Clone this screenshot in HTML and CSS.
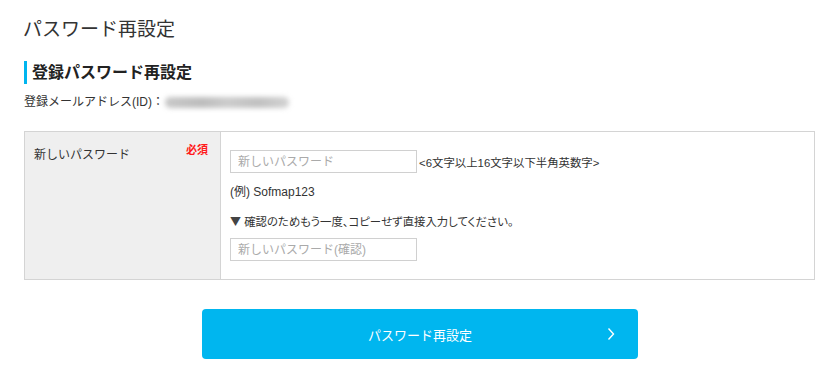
FILE: index.html
```html
<!DOCTYPE html>
<html lang="ja">
<head>
<meta charset="utf-8">
<title>パスワード再設定</title>
<link rel="stylesheet" href="styles.css">
</head>
<body>
<div class="page">
  <h1 class="title">パスワード再設定</h1>
  <h2 class="section">登録パスワード再設定</h2>
  <p class="email">登録メールアドレス(ID)：<span class="masked" aria-hidden="true"></span></p>

  <div class="form-table">
    <div class="label-cell">
      <span class="label">新しいパスワード</span>
      <span class="req">必須</span>
    </div>
    <div class="field-cell">
      <div class="row">
        <input class="pw" type="password" placeholder="新しいパスワード">
        <span class="hint">&lt;6文字以上16文字以下半角英数字&gt;</span>
      </div>
      <p class="example">(例) Sofmap123</p>
      <p class="note"><span class="tri">▼</span> 確認のためもう一度、コピーせず直接入力してください。</p>
      <input class="pw pw2" type="password" placeholder="新しいパスワード(確認)">
    </div>
  </div>

  <div class="actions">
    <button class="submit" type="button">
      <span>パスワード再設定</span>
      <svg class="chev" width="8" height="14" viewBox="0 0 8 14"><polyline points="1.5,1.5 6.5,7 1.5,12.5" fill="none" stroke="#fff" stroke-width="1.4"/></svg>
    </button>
  </div>
</div>
</body>
</html>
```

FILE: styles.css
```css
* { box-sizing: border-box; }
html, body { margin: 0; padding: 0; background: #fff; }
body {
  font-family: "Liberation Sans", "Noto Sans CJK JP", sans-serif;
  color: #333;
  font-size: 12px;
}
.page {
  padding: 20px 25px 0 24px;
}
.title {
  margin: 0;
  font-size: 19px;
  line-height: 19px;
  font-weight: normal;
  color: #333;
  margin-left: -1px;
}
.section {
  margin: 22px 0 0 0;
  border-left: 3px solid #00b5ef;
  padding-left: 5px;
  font-size: 16px;
  line-height: 23px;
  font-weight: bold;
  color: #222;
}
.email {
  margin: 9px 0 0 0;
  font-size: 12px;
  line-height: 18px;
  display: flex;
  align-items: center;
}
.masked {
  display: inline-block;
  width: 124px;
  height: 11px;
  margin-left: 1px;
  border-radius: 5px;
  background: linear-gradient(90deg, #c8c8c8, #bcbcbc 30%, #cbcbcb 50%, #c0c0c0 75%, #d2d2d2);
  filter: blur(2.5px);
}
.form-table {
  margin-top: 20px;
  border: 1px solid #d4d4d4;
  display: grid;
  grid-template-columns: 196px 1fr;
  height: 149px;
}
.label-cell {
  background: #efefef;
  border-right: 1px solid #d4d4d4;
  padding: 14px 12px 0 9px;
  display: flex;
  justify-content: space-between;
  align-items: flex-start;
}
.label {
  font-size: 12px;
  line-height: 18px;
}
.req {
  color: #ff1a1a;
  font-size: 11px;
  line-height: 14px;
  font-weight: bold;
  margin-top: -3px;
}
.field-cell {
  padding: 18px 0 0 9px;
}
.row {
  display: flex;
  align-items: center;
}
.pw {
  width: 187px;
  height: 23px;
  border: 1px solid #d0d0d0;
  border-radius: 0;
  padding: 0 7px;
  font-family: inherit;
  font-size: 12px;
  color: #333;
  background: #fff;
  outline: none;
  margin: 0;
}
.pw::placeholder { color: #aaa; }
.hint {
  margin-left: 2px;
  font-size: 11.4px;
}
.example {
  margin: 10px 0 0 0;
  line-height: 18px;
}
.note {
  margin: 11px 0 0 0;
  line-height: 18px;
  font-size: 11.4px;
  font-feature-settings: "palt";
}
.tri {
  font-family: "Noto Sans CJK JP", sans-serif;
  font-size: 11px;
  font-feature-settings: normal;
  color: #444;
}
.pw2 {
  display: block;
  margin-top: 7px;
}
.actions {
  display: flex;
  justify-content: center;
  margin-top: 29px;
  margin-left: -24px;
  margin-right: -25px;
}
.submit {
  width: 436px;
  height: 50px;
  background: #00b6ef;
  border: none;
  border-radius: 4px;
  color: #fff;
  font-family: inherit;
  font-size: 13px;
  position: relative;
  display: flex;
  align-items: center;
  justify-content: center;
  padding: 0;
  cursor: pointer;
}
.chev {
  position: absolute;
  right: 23px;
  top: 18px;
}
```
